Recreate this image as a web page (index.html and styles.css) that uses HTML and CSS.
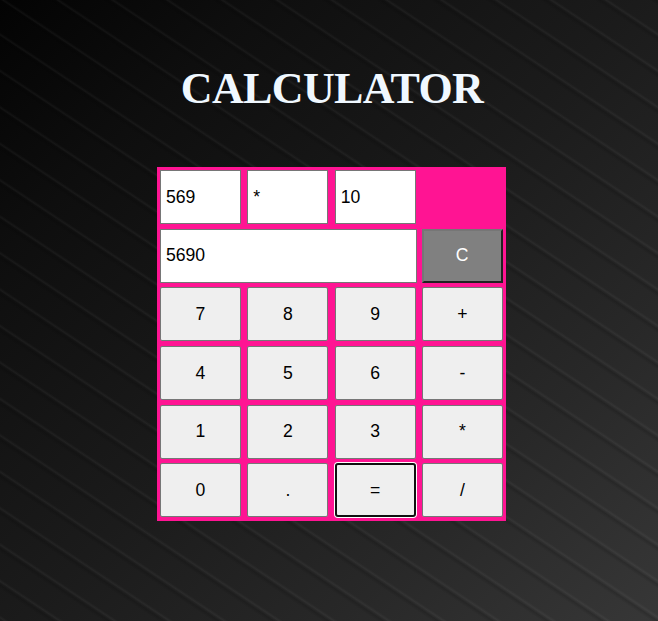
FILE: index.html
```html
<!DOCTYPE html>
<html lang="en">
<head>
<meta charset="utf-8">
<title>Calculator</title>
<link rel="stylesheet" href="styles.css">
</head>
<body>
<h1 class="title">CALCULATOR</h1>
<main class="calculator">
  <input class="field" type="text" value="569" aria-label="First number">
  <input class="field" type="text" value="*" aria-label="Operator">
  <input class="field" type="text" value="10" aria-label="Second number">
  <span></span>
  <input class="field result" type="text" value="5690" aria-label="Result">
  <button class="key clear">C</button>
  <button class="key">7</button>
  <button class="key">8</button>
  <button class="key">9</button>
  <button class="key">+</button>
  <button class="key">4</button>
  <button class="key">5</button>
  <button class="key">6</button>
  <button class="key">-</button>
  <button class="key">1</button>
  <button class="key">2</button>
  <button class="key">3</button>
  <button class="key">*</button>
  <button class="key">0</button>
  <button class="key">.</button>
  <button class="key equals">=</button>
  <button class="key">/</button>
</main>
</body>
</html>
```

FILE: styles.css
```css
* {
  box-sizing: border-box;
}

body {
  margin: 0;
  height: 621px;
  overflow: hidden;
  background:
    repeating-linear-gradient(213.6deg,
      rgba(0, 0, 0, 0) 0,
      rgba(0, 0, 0, 0.16) 1.5px,
      rgba(0, 0, 0, 0) 5px,
      rgba(255, 255, 255, 0) 26.5px,
      rgba(255, 255, 255, 0.042) 28.8px,
      rgba(255, 255, 255, 0) 30.35px),
    linear-gradient(135deg, #030303 0%, #0e0e0e 20%, #1b1b1b 50%, #282828 75%, #373737 100%);
}

.title {
  margin: 0;
  padding-top: 64px;
  height: 167px;
  font: bold 44px/50px "Liberation Serif", serif;
  letter-spacing: -0.65px;
  text-align: center;
  color: aliceblue;
  padding-left: 6px;
}

.calculator {
  display: grid;
  grid-template-columns: 81px 81px 81px 81px;
  grid-auto-rows: 54px;
  gap: 4.66px 6.33px;
  width: 349px;
  height: 354px;
  margin-left: 157px;
  padding: 3.1px 3px;
  background: deeppink;
}

.field,
.key {
  width: 100%;
  height: 54px;
  margin: 0;
  font: 17.6px "Liberation Sans", sans-serif;
  color: #000;
  border: 1px solid #767676;
}

.field {
  padding: 1px 5px;
  background: #fff;
  border-radius: 0;
  outline: none;
}

.result {
  grid-column: span 3;
  width: 257px;
}

.key {
  padding: 0;
  background: #efefef;
  border-radius: 2px;
}

.clear {
  padding-right: 1px;
  color: #fff;
  background: gray;
  border: 2px solid;
  border-color: #767676 #212121 #212121 #767676;
  border-radius: 0;
}

.equals {
  border: 2px solid #101010;
  border-radius: 3px;
  box-shadow: 0 0 0 1px #fff;
}
```
